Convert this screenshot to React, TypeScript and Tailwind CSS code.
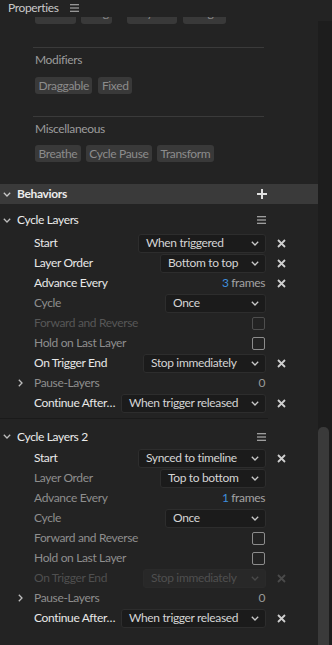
import React from "react";

const ChevronDown = ({ className = "" }: { className?: string }) => (
  <svg width="8" height="5" viewBox="0 0 8 5" className={className}>
    <path d="M0.8 0.8L4 4L7.2 0.8" stroke="currentColor" strokeWidth="1.3" fill="none" />
  </svg>
);

const ChevronRight = ({ className = "" }: { className?: string }) => (
  <svg width="5" height="8" viewBox="0 0 5 8" className={className}>
    <path d="M0.8 0.8L4 4L0.8 7.2" stroke="currentColor" strokeWidth="1.3" fill="none" />
  </svg>
);

const XIcon = ({ dim }: { dim?: boolean }) => (
  <svg width="9" height="9" viewBox="0 0 9 9" className={dim ? "text-[#4a4a4a]" : "text-[#cfcfcf]"}>
    <path d="M1 1L8 8M8 1L1 8" stroke="currentColor" strokeWidth="1.8" />
  </svg>
);

const Hamburger = ({ className = "" }: { className?: string }) => (
  <svg width="9" height="8" viewBox="0 0 9 8" className={className}>
    <path d="M0 0.75H9M0 4H9M0 7.25H9" stroke="currentColor" strokeWidth="1.2" />
  </svg>
);

const Plus = () => (
  <svg width="10" height="10" viewBox="0 0 10 10" className="text-[#e0e0e0]">
    <path d="M5 0V10M0 5H10" stroke="currentColor" strokeWidth="2" />
  </svg>
);

function Select({ w, text, disabled }: { w: string; text: string; disabled?: boolean }) {
  return (
    <div
      className={`h-[19px] ${w} flex items-center justify-between rounded-[3px] border pl-[7px] pr-[6px] text-[12px] whitespace-nowrap ${
        disabled ? "bg-[#282828] border-[#2a2a2a] text-[#4f4f4f]" : "bg-[#1b1b1b] border-[#2d2d2d] text-[#d4d4d4]"
      }`}
    >
      <span>{text}</span>
      <ChevronDown className={disabled ? "text-[#4a4a4a]" : "text-[#c8c8c8]"} />
    </div>
  );
}

function Checkbox({ dim }: { dim?: boolean }) {
  return (
    <div
      className={`w-[13px] h-[13px] rounded-[2px] border-[1.5px] mr-[1px] ${dim ? "border-[#4e4e4e]" : "border-[#8c8c8c]"}`}
    />
  );
}

function Frames({ n }: { n: string }) {
  return (
    <span className="text-[12px] whitespace-nowrap pr-[1px]">
      <span className="text-[#3f8fde]">{n}</span> <span className="text-[#a2a2a2]">frames</span>
    </span>
  );
}

function Row({
  label,
  tone,
  children,
  x,
  xDim,
  expand,
}: {
  label: string;
  tone: string;
  children?: React.ReactNode;
  x?: boolean;
  xDim?: boolean;
  expand?: boolean;
}) {
  return (
    <div className="flex h-[20px] items-center">
      <div className="w-[34px] shrink-0 flex items-center">
        {expand && <ChevronRight className="ml-[18px] text-[#bdbdbd]" />}
      </div>
      <div className={`flex-1 min-w-0 text-[12px] whitespace-nowrap ${tone}`}>{label}</div>
      <div className="flex justify-end">{children}</div>
      <div className="w-[30px] shrink-0 flex justify-center">{x && <XIcon dim={xDim} />}</div>
      <div className="w-[22px] shrink-0" />
    </div>
  );
}

const ON = "text-[#e8e8e8]";
const OFF = "text-[#8e8e8e]";
const DIM = "text-[#575757]";
const DIMMER = "text-[#4f4f4f]";

function Tag({ children }: { children: React.ReactNode }) {
  return (
    <span className="h-[17px] px-[3.5px] flex items-center rounded-[3px] bg-[#393939] text-[12px] text-[#8c8c8c] whitespace-nowrap">
      {children}
    </span>
  );
}

function Title({ text, className = "" }: { text: string; className?: string }) {
  return (
    <div className={`flex items-center ${className}`}>
      <div className="w-[17px] shrink-0 flex items-center">
        <ChevronDown className="ml-[3px] text-[#bdbdbd]" />
      </div>
      <div className="flex-1 text-[12px] text-[#ececec]">{text}</div>
      <div className="w-[9px] flex justify-center mr-[52px]">
        <Hamburger className="text-[#c8c8c8]" />
      </div>
    </div>
  );
}

const clipTag =
  "h-[17px] shrink-0 flex items-end justify-center pb-[4px] rounded-[3px] bg-[#393939] text-[12px] leading-[14px] text-[#8c8c8c]";

export default function App() {
  return (
    <div className="w-[332px] h-[645px] bg-[#232323] overflow-hidden flex flex-col [font-family:Lato,sans-serif] tracking-[-0.35px]">
      <div className="h-[17px] shrink-0 flex items-start pl-[8px]">
        <span className="text-[12px] leading-[15px] text-[#c9c9c9]">Properties</span>
        <Hamburger className="ml-[11px] mt-[4px] text-[#bdbdbd]" />
      </div>
      <div className="flex flex-1 min-h-0">
        <div className="w-[318px] shrink-0 overflow-hidden">
          <div className="h-[7px] overflow-hidden flex items-end pl-[35px]">
            <span className={`${clipTag} w-[41px]`}>Blink</span>
            <span className={`${clipTag} w-[31px] ml-[5px]`}>Drag</span>
            <span className={`${clipTag} w-[50px] ml-[15px]`}>Physics</span>
            <span className={`${clipTag} w-[43px] ml-[6px]`}>Dangle</span>
          </div>
          <div className="mt-[23px] ml-[33px] w-[231px] h-px bg-[#3a3a3a]" />
          <div className="mt-[4px] h-[16px] leading-[16px] pl-[35px] text-[12px] text-[#9c9c9c]">Modifiers</div>
          <div className="mt-[9px] pl-[35px] flex gap-[6px]">
            <Tag>Draggable</Tag>
            <Tag>Fixed</Tag>
          </div>
          <div className="mt-[22px] ml-[33px] w-[231px] h-px bg-[#3a3a3a]" />
          <div className="mt-[4px] h-[16px] leading-[16px] pl-[35px] text-[12px] text-[#9c9c9c]">Miscellaneous</div>
          <div className="mt-[8px] pl-[35px] flex gap-[5px]">
            <Tag>Breathe</Tag>
            <Tag>Cycle Pause</Tag>
            <Tag>Transform</Tag>
          </div>
          <div className="mt-[22px] h-[20px] bg-[#3a3a3a] flex items-center">
            <div className="w-[17px] shrink-0 flex items-center">
              <ChevronDown className="ml-[3px] text-[#c8c8c8]" />
            </div>
            <div className="flex-1 text-[12px] font-bold text-[#ececec]">Behaviors</div>
            <div className="mr-[51px] flex">
              <Plus />
            </div>
          </div>

          <Title text="Cycle Layers" className="mt-[4px] h-[24px]" />
          <div className="mt-[1px]">
            <Row label="Start" tone={ON} x>
              <Select w="w-[128px]" text="When triggered" />
            </Row>
            <Row label="Layer Order" tone={ON} x>
              <Select w="w-[106px]" text="Bottom to top" />
            </Row>
            <Row label="Advance Every" tone={ON} x>
              <Frames n="3" />
            </Row>
            <Row label="Cycle" tone={OFF}>
              <Select w="w-[101px]" text="Once" />
            </Row>
            <Row label="Forward and Reverse" tone={DIM}>
              <Checkbox dim />
            </Row>
            <Row label="Hold on Last Layer" tone={OFF}>
              <Checkbox />
            </Row>
            <Row label="On Trigger End" tone={ON} x>
              <Select w="w-[123px]" text="Stop immediately" />
            </Row>
            <Row label="Pause-Layers" tone={OFF} expand>
              <span className="text-[12px] text-[#9a9a9a] pr-[1px]">0</span>
            </Row>
            <Row label="Continue After…" tone={ON} x>
              <Select w="w-[145px]" text="When trigger released" />
            </Row>
          </div>

          <div className="mt-[5px] w-[268px] h-px bg-[#1a1a1a]" />

          <Title text="Cycle Layers 2" className="mt-[6px] h-[23px]" />
          <div>
            <Row label="Start" tone={ON} x>
              <Select w="w-[128px]" text="Synced to timeline" />
            </Row>
            <Row label="Layer Order" tone={OFF}>
              <Select w="w-[106px]" text="Top to bottom" />
            </Row>
            <Row label="Advance Every" tone={OFF}>
              <Frames n="1" />
            </Row>
            <Row label="Cycle" tone={OFF}>
              <Select w="w-[101px]" text="Once" />
            </Row>
            <Row label="Forward and Reverse" tone={OFF}>
              <Checkbox />
            </Row>
            <Row label="Hold on Last Layer" tone={OFF}>
              <Checkbox />
            </Row>
            <Row label="On Trigger End" tone={DIMMER} x xDim>
              <Select w="w-[123px]" text="Stop immediately" disabled />
            </Row>
            <Row label="Pause-Layers" tone={OFF} expand>
              <span className="text-[12px] text-[#9a9a9a] pr-[1px]">0</span>
            </Row>
            <Row label="Continue After…" tone={ON} x>
              <Select w="w-[145px]" text="When trigger released" />
            </Row>
          </div>
        </div>
        <div className="w-[14px] shrink-0 pt-[4px] flex flex-col">
          <div className="flex-1 bg-[#1d1d1d] flex flex-col">
            <div className="mt-[406px] w-[11px] flex-1 rounded-t-[5px] bg-[#3a3a3a]" />
          </div>
        </div>
      </div>
    </div>
  );
}
